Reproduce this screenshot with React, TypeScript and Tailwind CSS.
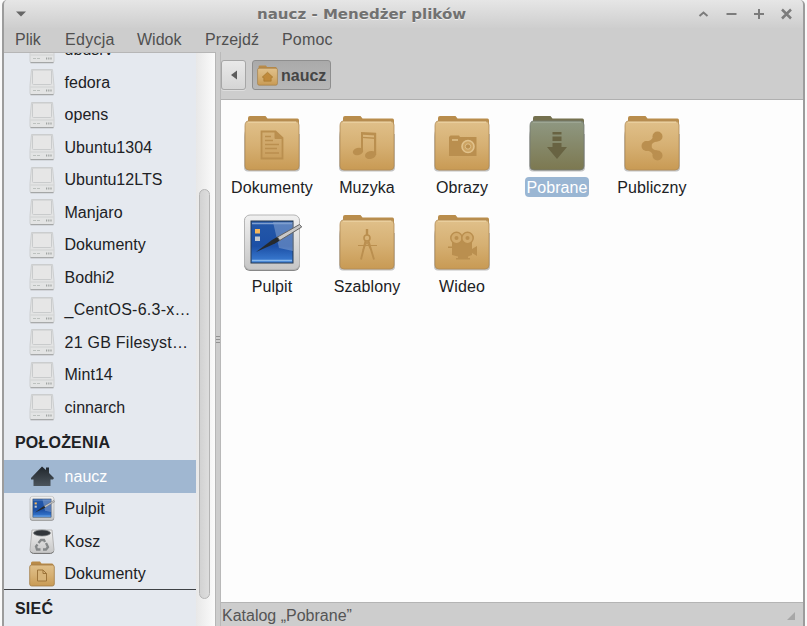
import React from "react";

type FolderKind = "doc" | "music" | "camera" | "down" | "share" | "compass" | "video";

function Defs() {
  return (
    <svg className="absolute h-0 w-0" aria-hidden="true">
      <defs>
        <linearGradient id="folder" x1="0" y1="0" x2="0" y2="1">
          <stop offset="0" stopColor="#e0c08a" />
          <stop offset="0.5" stopColor="#d6b073" />
          <stop offset="1" stopColor="#c89a54" />
        </linearGradient>
        <linearGradient id="folderSel" x1="0" y1="0" x2="0" y2="1">
          <stop offset="0" stopColor="#8f9882" />
          <stop offset="1" stopColor="#7c7850" />
        </linearGradient>
        <linearGradient id="screen" x1="0" y1="0" x2="0" y2="1">
          <stop offset="0" stopColor="#2458a8" />
          <stop offset="0.6" stopColor="#1c4fa5" />
          <stop offset="1" stopColor="#3d80d6" />
        </linearGradient>
        <linearGradient id="metal" x1="0" y1="0" x2="0" y2="1">
          <stop offset="0" stopColor="#f0f0f0" />
          <stop offset="1" stopColor="#c6c6c6" />
        </linearGradient>
        <linearGradient id="house" x1="0" y1="0" x2="0" y2="1">
          <stop offset="0" stopColor="#20262c" />
          <stop offset="1" stopColor="#4b545c" />
        </linearGradient>
      </defs>
    </svg>
  );
}

function Emblem({ kind, color }: { kind: FolderKind; color: string }) {
  switch (kind) {
    case "doc":
      return (
        <g>
          <path d="M19.500 17.500h14l7 6.500v20.500h-21z" fill={color} fillOpacity=".25" stroke={color} strokeWidth="1.800" />
          <path d="M33 17.500v7h7" fill={color} stroke={color} strokeWidth="1" />
          <path d="M23 22.500h6M23 26.500h8M23 30.500h14M23 34.500h12M23 39h14" stroke={color} strokeWidth="1.500" />
        </g>
      );
    case "music":
      return (
        <g fill={color}>
          <path d="M24 18l15 .8v2.700l-13-.8V37h-2z" />
          <path d="M37 19h2.200v22H37z" />
          <path d="M25 22.800l13 .8v1.300l-13-.8z" />
          <ellipse cx="21" cy="37.500" rx="5.300" ry="3.700" transform="rotate(-15 21 37.500)" />
          <ellipse cx="33.500" cy="41" rx="5.600" ry="3.900" transform="rotate(-15 33.500 41)" />
        </g>
      );
    case "camera":
      return (
        <g>
          <path d="M17 23l1.500-1.500H27l1 1.500h16.500v19H17z" fill={color} />
          <path d="M20 26h6" stroke="#e0c38d" strokeWidth="1.500" />
          <circle cx="36" cy="32.500" r="6" fill="#cda463" stroke="#e1c28c" strokeWidth="1.600" />
          <circle cx="36" cy="32.500" r="2.700" fill={color} stroke="#dfc08a" />
        </g>
      );
    case "down":
      return <path d="M25.500 18h9v2.500h-9zM25.500 22.500h9V27h-9zM25.500 29h9v4H40L30 45 20 33h5.500z" fill={color} />;
    case "share":
      return (
        <g fill={color}>
          <circle cx="35.500" cy="22.500" r="5" />
          <circle cx="24.500" cy="32" r="5" />
          <circle cx="35.500" cy="41.500" r="5" />
          <path d="M23 27.500c4.500 0 7-1.500 8.500-5.500l4 5.500c-4 .3-6 2-6 4.500s2 4.200 6 4.500l-4 5.500c-1.500-4-4-5.500-8.500-5.500z" />
        </g>
      );
    case "compass":
      return (
        <g fill="none" stroke={color} strokeWidth="1.600">
          <path d="M30 16v6" strokeWidth="2.400" />
          <circle cx="30" cy="25" r="3" />
          <path d="M28.500 28L24 46.500M31.500 28L37 46.500" strokeWidth="1.900" />
          <path d="M21 32.500h19M26 37l4-8 4 8" strokeWidth="1.100" />
        </g>
      );
    case "video":
      return (
        <g>
          <path d="M20 28h20v14l-4 1.500V45h2v1.500H24V45h2v-1.500L20 42zM16 33.500h4V35h-4zM40 36l5-3v10l-5-3z" fill={color} />
          <g fill="#d2ab6d" stroke={color} strokeWidth="1.500">
            <circle cx="24.500" cy="25" r="5.700" />
            <circle cx="35.500" cy="25" r="5.700" />
          </g>
          <circle cx="24.500" cy="25" r="2" fill={color} />
          <circle cx="35.500" cy="25" r="2" fill={color} />
        </g>
      );
  }
}

function Folder({ kind, selected }: { kind: FolderKind; selected?: boolean }) {
  return (
    <svg viewBox="0 0 60 60" className="h-[60px] w-[60px]">
      <path d="M3 17c-1 4-1 5-1 8v28.500q0 4 4 4h48q4 0 4-4V20z" fill="#777" opacity=".45" />
      <path d="M6 4q0-2 2-2h15.500l2 2.500h30q1.500 0 1.500 2v5H6z" fill={selected ? "#75714f" : "#b98d4c"} />
      <path
        d="M6.500 7h47q3.500 0 3.500 4v41q0 4-4 4H7q-4 0-4-4V12q0-5 3.500-5z"
        fill={selected ? "url(#folderSel)" : "url(#folder)"}
        stroke={selected ? "#737a72" : "#b08b57"}
        strokeWidth=".8"
      />
      <path d="M6 8.300h48" stroke={selected ? "#a2aa98" : "#ebd2a3"} strokeWidth="1" />
      <Emblem kind={kind} color={selected ? "#686342" : "#ba8f4f"} />
    </svg>
  );
}

function Desktop({ className }: { className: string }) {
  return (
    <svg viewBox="0 0 60 60" className={className}>
      <rect x="2" y="2.500" width="56" height="55.500" rx="6" fill="#888" />
      <rect x="2.500" y="2" width="55" height="54.500" rx="5.500" fill="url(#metal)" stroke="#b5b5b5" />
      <rect x="9" y="8" width="42" height="42" fill="url(#screen)" stroke="#26384f" />
      <path d="M31 9l6 26 14 3V9z" fill="#fff" opacity=".25" />
      <path d="M10 10.500h40" stroke="#7f9fcf" strokeWidth="1.500" />
      <path d="M10 47.500h40" stroke="#87b8ec" strokeWidth="1.700" />
      <rect x="13" y="16" width="5" height="4.500" fill="#f6b75b" />
      <rect x="13" y="23.500" width="5" height="4.500" fill="#c4c9cf" />
      <path d="M14 39l16-12 6-3.500 2 4-5 3z" fill="#252a2e" />
      <path d="M35.500 24l22-12.500 2.200 2.500-22 13.500z" fill="#c8c8c8" stroke="#626262" strokeWidth="1" />
    </svg>
  );
}

function Drive() {
  return (
    <svg viewBox="0 0 26 28" className="h-7 w-[26px]">
      <path d="M2.500 1.500h21l1.500 16v7.500q0 1.500-1.500 1.500h-21Q1 26.500 1 25v-7.500z" fill="#e3e4e4" stroke="#cdcfd0" />
      <rect x="3.500" y="2" width="19" height="14.500" rx="1" fill="#e6e6e6" stroke="#c9cbcc" />
      <path d="M1.500 19h23" stroke="#d0d2d2" />
      <path d="M1.500 26.700h23" stroke="#a4a6a6" strokeWidth="1.200" />
      <path d="M4 22.500h7" stroke="#bcc1be" strokeDasharray="3 1" />
      <path d="M17 22.500h6" stroke="#a0a4a2" strokeWidth="2" strokeDasharray="1.200 1" />
    </svg>
  );
}

function House() {
  return (
    <svg viewBox="0 0 26 26" className="h-[26px] w-[26px]">
      <path d="M2 15L13 3.500l4 3.500V4.500h3v5.500l5 5-1 1.500h-2.500V23h-17v-6.500H2z" fill="url(#house)" />
    </svg>
  );
}

function Trash() {
  return (
    <svg viewBox="0 0 26 26" className="h-[26px] w-[26px]">
      <path d="M3 2h20l2 20q0 3-3 3H4q-3 0-3-3z" fill="url(#metal)" stroke="#b4b4b4" />
      <path d="M1.500 23.500q1 2 3 2h17q2 0 3-2" fill="none" stroke="#777" />
      <ellipse cx="13" cy="5" rx="8.500" ry="3" fill="#32363a" stroke="#74787a" strokeWidth=".7" />
      <g fill="none" stroke="#858889" strokeWidth="2.300">
        <path d="M9.500 15l2.500-3h3l1 2" />
        <path d="M17 15l2 4-2 2.500h-3" />
        <path d="M11.500 21.500H8l-1-3 1.500-2" />
      </g>
    </svg>
  );
}

function SmallFolder({ home }: { home?: boolean }) {
  return (
    <svg viewBox="0 0 26 26" className={home ? "h-[21px] w-[21px]" : "h-[26px] w-[26px]"}>
      <path d="M2 2q0-1.500 1.500-1.500H11l1.500 2H23q1.500 0 1.500 2V9H2z" fill="#b98b49" />
      <path d="M2.500 4h21q1.800 0 1.800 2v17q0 2-2 2H2.700q-2 0-2-2V6q0-2 1.800-2z" fill="url(#folder)" stroke="#a27c46" strokeWidth=".8" />
      {home ? (
        <path d="M6.500 15L13 9l6.500 6-2 .8V20h-9v-4.200z" fill="#c08a3c" stroke="#a1762f" strokeWidth=".8" />
      ) : (
        <path d="M8.500 9h5.500l3.500 3.500v7.500h-9zM14 9v3.500h3.500" fill="#d8b479" stroke="#9d743a" />
      )}
    </svg>
  );
}

const drives = ["ubusrv", "fedora", "opens", "Ubuntu1304", "Ubuntu12LTS", "Manjaro", "Dokumenty", "Bodhi2", "_CentOS-6.3-x…", "21 GB Filesyst…", "Mint14", "cinnarch"];

function SideRow({ icon, label, selected }: { icon: React.ReactNode; label: string; selected?: boolean }) {
  const long = label.endsWith("…");
  return (
    <div className={`flex h-[32.5px] shrink-0 items-center pl-[25px] ${selected ? "bg-[#a0b7d1] text-white" : ""}`}>
      <span className="flex w-[26px] justify-center">{icon}</span>
      <span className={`ml-[9.5px] whitespace-nowrap pt-px ${long ? "tracking-[0.25px]" : "tracking-[0.04px]"}`}>{label}</span>
    </div>
  );
}

function FileItem({ icon, label, selected }: { icon: React.ReactNode; label: string; selected?: boolean }) {
  return (
    <div className="flex h-[99px] flex-col items-center">
      {icon}
      <span className={`mt-[3px] flex h-5 items-center whitespace-nowrap rounded-[4px] px-px pt-px tracking-[0.1px] ${selected ? "bg-[#9ab6d3] text-white" : ""}`}>{label}</span>
    </div>
  );
}

export default function App() {
  return (
    <div className="flex h-[626px] w-[807px] bg-[#fafafa] pl-0.5 font-['Liberation_Sans',Arial,sans-serif] text-[16px] leading-5 text-[#202124]">
      <Defs />
      <div className="flex h-full w-[803px] flex-col overflow-hidden rounded-t-[5px] border-x-2 border-[#9c9c9c] bg-[#cdcdcd]">
        <header className="grid h-[28px] shrink-0 grid-cols-[253px_1fr_110px] items-center bg-gradient-to-b from-[#e6e6e6] to-[#cecece]">
          <svg viewBox="0 0 12 8" className="ml-[11px] h-2 w-3">
            <path d="M1 1.500h10L6 6.500z" fill="#666" />
          </svg>
          <h1 className="origin-left scale-x-[1.13] whitespace-nowrap pt-0.5 text-[13.3px] font-bold text-[#717171] [font-family:'DejaVu_Sans',Verdana,sans-serif] [text-shadow:0_1px_0_#eee]">naucz - Menedżer plików</h1>
          <svg viewBox="0 0 110 28" className="h-7 w-[110px]" fill="none" stroke="#7c7c7c" strokeWidth="2">
            <path d="M6.500 16l4-3.500 4 3.500" />
            <path d="M33.500 14h10" />
            <path d="M61 14h10M66 9v10" />
            <path d="M89 9.500l9 9M98 9.500l-9 9" strokeWidth="2.500" />
          </svg>
        </header>
        <nav className="flex h-6 shrink-0 items-center pl-[11px] text-[#505050]">
          <span className="w-[50px]">Plik</span>
          <span className="w-[72px] tracking-[0.3px]">Edycja</span>
          <span className="w-[68px]">Widok</span>
          <span className="w-[77px] tracking-[0.1px]">Przejdź</span>
          <span className="tracking-[0.2px]">Pomoc</span>
        </nav>
        <div className="flex min-h-0 flex-1">
          <aside className="flex w-[212px] overflow-hidden border-r border-t border-[#b6b6b6] bg-[#f4f4f4]">
            <div className="flex w-[192px] shrink-0 flex-col overflow-hidden bg-[#e5e9ef]">
              <div className="-mt-[19.5px] shrink-0">
                {drives.map((d) => (
                  <SideRow key={d} icon={<Drive />} label={d} />
                ))}
              </div>
              <div className="flex h-[36.5px] shrink-0 items-center pl-[11px] pt-0.5 font-bold tracking-[0.2px]">POŁOŻENIA</div>
              <SideRow icon={<House />} label="naucz" selected />
              <SideRow icon={<Desktop className="h-[27px] w-[27px]" />} label="Pulpit" />
              <SideRow icon={<Trash />} label="Kosz" />
              <div className="-mb-px">
                <SideRow icon={<SmallFolder />} label="Dokumenty" />
              </div>
              <div className="flex h-[38px] shrink-0 items-center border-t border-[#3e4145] pl-[11px] font-bold tracking-[0.2px]">SIEĆ</div>
            </div>
            <div className="flex flex-1 justify-center bg-gradient-to-r from-[#e8e8e8] to-[#fbfbfb] pr-0.5 pt-[136px]">
              <div className="h-[410px] w-[11px] rounded-full border border-[#b4b4b4] bg-gradient-to-r from-[#d2d2d2] to-[#dedede]" />
            </div>
          </aside>
          <div className="flex w-[5px] flex-col items-center justify-center gap-[2px] border-r border-[#b9b9b9]">
            <i className="h-px w-[4px] bg-[#929292]" />
            <i className="h-px w-[4px] bg-[#929292]" />
            <i className="h-px w-[4px] bg-[#929292]" />
          </div>
          <section className="flex min-w-0 flex-1 flex-col">
            <div className="flex h-[47px] shrink-0 items-start gap-[6px] pt-2">
              <button className="flex h-[30px] w-[25px] items-center justify-center rounded-[3px] border border-[#a6a6a6] bg-gradient-to-b from-[#e9e9e9] to-[#d5d5d5] shadow-[0_1px_0_#dedede]">
                <svg viewBox="0 0 8 10" className="h-2.5 w-2">
                  <path d="M7 .5v9L1 5z" fill="#5c5c5c" />
                </svg>
              </button>
              <button className="flex h-[30px] w-[79px] items-center gap-[3px] rounded-[3px] border border-[#8e8e8e] bg-gradient-to-b from-[#aaa] to-[#b8b8b8] pl-1 font-bold text-[#454545]">
                <SmallFolder home />
                <span className="pt-px">naucz</span>
              </button>
            </div>
            <main className="flex-1 border-t border-[#b0b0b0] bg-[#fdfdfd] pl-[3.5px] pt-[14px]">
              <div className="grid grid-cols-[repeat(5,95px)]">
                <FileItem icon={<Folder kind="doc" />} label="Dokumenty" />
                <FileItem icon={<Folder kind="music" />} label="Muzyka" />
                <FileItem icon={<Folder kind="camera" />} label="Obrazy" />
                <FileItem icon={<Folder kind="down" selected />} label="Pobrane" selected />
                <FileItem icon={<Folder kind="share" />} label="Publiczny" />
                <FileItem icon={<Desktop className="h-[60px] w-[60px]" />} label="Pulpit" />
                <FileItem icon={<Folder kind="compass" />} label="Szablony" />
                <FileItem icon={<Folder kind="video" />} label="Wideo" />
              </div>
            </main>
            <footer className="flex h-6 shrink-0 items-center justify-between border-t border-[#b4b4b4] pl-px pr-[7px] pt-[3px] text-[#555]">
              <span>Katalog „Pobrane”</span>
              <svg viewBox="0 0 10 10" className="h-2.5 w-2.5">
                <path d="M9 1v8H1z" fill="#a7a7a7" />
              </svg>
            </footer>
          </section>
        </div>
      </div>
    </div>
  );
}
